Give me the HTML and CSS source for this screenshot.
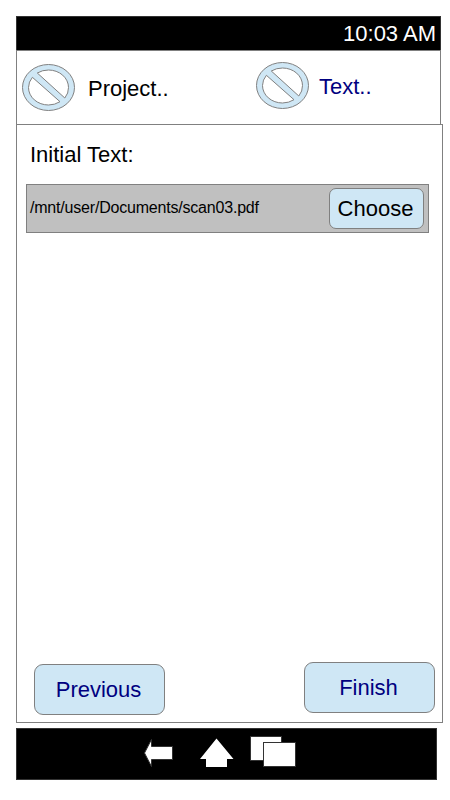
FILE: index.html
```html
<!DOCTYPE html>
<html lang="en">
<head>
<meta charset="utf-8">
<title>Initial Text</title>
<link rel="stylesheet" href="styles.css">
</head>
<body>
<svg class="defs" width="0" height="0" aria-hidden="true">
  <symbol id="no-symbol" viewBox="0 0 53 47">
    <ellipse cx="26.5" cy="23.5" rx="26" ry="23" fill="#cfe7f5" stroke="#808080"/>
    <path d="M15.3 9A20 17.5 0 0 1 26.5 6A20 17.5 0 0 1 46.5 23.5A20 17.5 0 0 1 42.8 34ZM10.4 13.3A20 17.5 0 0 0 6.5 23.5A20 17.5 0 0 0 26.5 41A20 17.5 0 0 0 38 37.7Z" fill="#fff" stroke="#808080"/>
  </symbol>
</svg>
<div class="phone">
  <header class="status"><span class="label time">10:03 AM</span></header>
  <nav class="tabs">
    <a class="tab project"><svg class="tab-icon"><use href="#no-symbol"/></svg><span class="label tab-label">Project..</span></a>
    <a class="tab text"><svg class="tab-icon"><use href="#no-symbol"/></svg><span class="label tab-label">Text..</span></a>
  </nav>
  <main class="panel">
    <h1 class="label title">Initial Text:</h1>
    <div class="file">
      <span class="path">/mnt/user/Documents/scan03.pdf</span>
      <button class="button choose"><span class="label">Choose</span></button>
    </div>
    <div class="actions">
      <button class="button action previous"><span class="label">Previous</span></button>
      <button class="button action finish"><span class="label">Finish</span></button>
    </div>
  </main>
  <footer class="system">
    <svg class="system-icons" width="160" height="50" viewBox="140 729 160 50" fill="#fff" stroke="#333">
      <path d="M144.5 753 151.5 739.5V746.5H172.5V759.5H151.5V766.5Z"/>
      <path stroke="none" d="M216.5 738.5 233.5 759H227V767H206V759H200Z"/>
      <rect x="250.5" y="736.5" width="31" height="24"/>
      <rect x="263.5" y="742.5" width="32" height="24"/>
    </svg>
  </footer>
</div>
</body>
</html>
```
FILE: styles.css
```css
* {
  box-sizing: border-box;
}

body {
  margin: 0;
  background: #fff;
  color: #000;
  font-family: "Liberation Sans", Arial, sans-serif;
}

.defs {
  display: none;
}

.phone {
  width: 450px;
  height: 800px;
  padding: 16px 0 0 16px;
  display: flex;
  flex-direction: column;
}

.label {
  margin: 0;
  font-size: 22px;
  font-weight: 400;
  line-height: 26px;
  white-space: nowrap;
}

.status {
  width: 425px;
  height: 34px;
  padding: 4px 4px 0 0;
  display: flex;
  justify-content: flex-end;
  background: #000;
  border: 1px solid #333;
  border-bottom: 0;
  color: #fff;
}

.tabs {
  width: 425px;
  height: 74px;
  padding-left: 5px;
  display: flex;
  align-items: flex-start;
  border: 1px solid #808080;
  border-bottom: 0;
}

.tab {
  display: flex;
  align-items: flex-start;
}

.project {
  width: 234px;
  padding-top: 13px;
  gap: 13px;
}

.text {
  padding-top: 11px;
  gap: 10px;
  color: #000080;
}

.tab-icon {
  width: 53px;
  height: 47px;
}

.tab-label {
  margin-top: 12px;
}

.panel {
  width: 427px;
  height: 599px;
  padding: 17px 7px 7px 9px;
  display: flex;
  flex-direction: column;
  border: 1px solid #808080;
}

.title {
  padding-left: 4px;
}

.file {
  width: 403px;
  height: 49px;
  margin-top: 16px;
  padding: 3px 4px 3px 3px;
  display: flex;
  justify-content: space-between;
  align-items: center;
  background: #c0c0c0;
  border: 1px solid #808080;
}

.path {
  padding-bottom: 2px;
  font-size: 16px;
  line-height: 18px;
  letter-spacing: -0.2px;
}

.button {
  margin: 0;
  padding: 0 2px 0 0;
  display: flex;
  justify-content: center;
  align-items: flex-start;
  background: #cfe7f5;
  border: 1px solid #808080;
  color: inherit;
  font-family: inherit;
}

.choose {
  width: 95px;
  height: 41px;
  padding-top: 7px;
  border-radius: 7px;
}

.actions {
  margin-top: auto;
  padding-left: 8px;
  display: flex;
  justify-content: space-between;
  align-items: flex-start;
}

.action {
  width: 131px;
  height: 51px;
  padding-top: 12px;
  border-radius: 9px;
  color: #000080;
}

.previous {
  margin-top: 2px;
}

.system {
  width: 421px;
  height: 52px;
  margin-top: 5px;
  padding-left: 123px;
  background: #000;
  border: 1px solid #333;
}

.system-icons {
  display: block;
}
```
